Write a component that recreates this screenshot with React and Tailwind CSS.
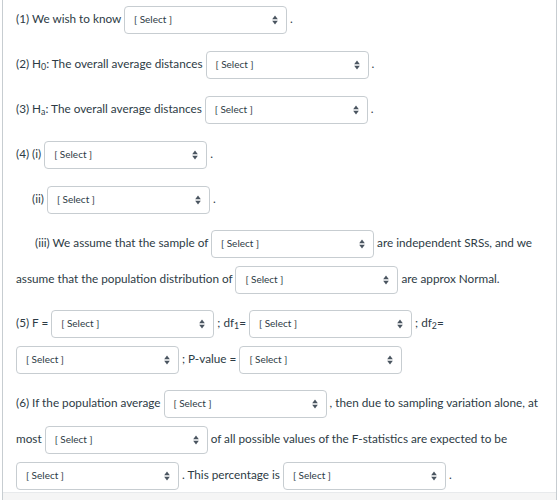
function Sel() {
  return (
    <span className="inline-flex h-[28px] w-[163px] items-center justify-between rounded-[4px] border border-[#c7cdd1] bg-white pl-[9px] pr-[8px] align-middle text-[10px] leading-none text-[#2d3b45]">
      <span className="-mt-[3px]">[ Select ]</span>
      <svg width="6" height="10" viewBox="0 0 6 10" className="shrink-0">
        <path d="M3 0.5 L5.8 4.2 L0.2 4.2 Z" fill="#4a5560" />
        <path d="M3 9.5 L5.8 5.8 L0.2 5.8 Z" fill="#4a5560" />
      </svg>
    </span>
  );
}

function P({ className = "", children }) {
  return <p className={`leading-[36px] ${className}`}>{children}</p>;
}

export default function App() {
  return (
    <div className="h-[500px] w-[560px] overflow-hidden bg-white">
      <div className="ml-[2px] flex h-full w-[555px] flex-col border-x border-[#c7cdd1]">
        <div
          className="h-[492px] shrink-0 overflow-hidden pl-[13px] pr-[10px] pt-[1px] text-[11.75px] text-[#2d3b45]"
          style={{ fontFamily: "Lato, 'Open Sans', sans-serif" }}
        >
          <P className="mb-[9px]">
            (1) We wish to know <Sel /> .
          </P>
          <P className="mb-[9px]">
            (2) H<sub>0</sub>: The overall average distances <Sel /> .
          </P>
          <P className="mb-[9px]">
            (3) H<sub>a</sub>: The overall average distances <Sel /> .
          </P>
          <P className="mb-[9px]">
            (4) (i) <Sel /> .
          </P>
          <P className="mb-[8px] pl-[16px]">
            (ii) <Sel /> .
          </P>
          <P className="mb-[8px]">
            <span className="pl-[19px]">(iii) We assume that the sample of</span> <Sel /> are independent SRSs, and
            we assume that the population distribution of <Sel /> are approx Normal.
          </P>
          <P className="mb-[8px]">
            (5) F = <Sel /> ; df<sub>1</sub>= <Sel /> ; df<sub>2</sub>= <Sel /> ; P-value = <Sel />
          </P>
          <P>
            (6) If the population average <Sel /> , then due to sampling variation alone, at most <Sel /> of all
            possible values of the F-statistics are expected to be <Sel /> . This percentage is <Sel /> .
          </P>
        </div>
        <div className="flex-1 border-t border-[#e8eaec] bg-[#f5f5f5]" />
      </div>
    </div>
  );
}
